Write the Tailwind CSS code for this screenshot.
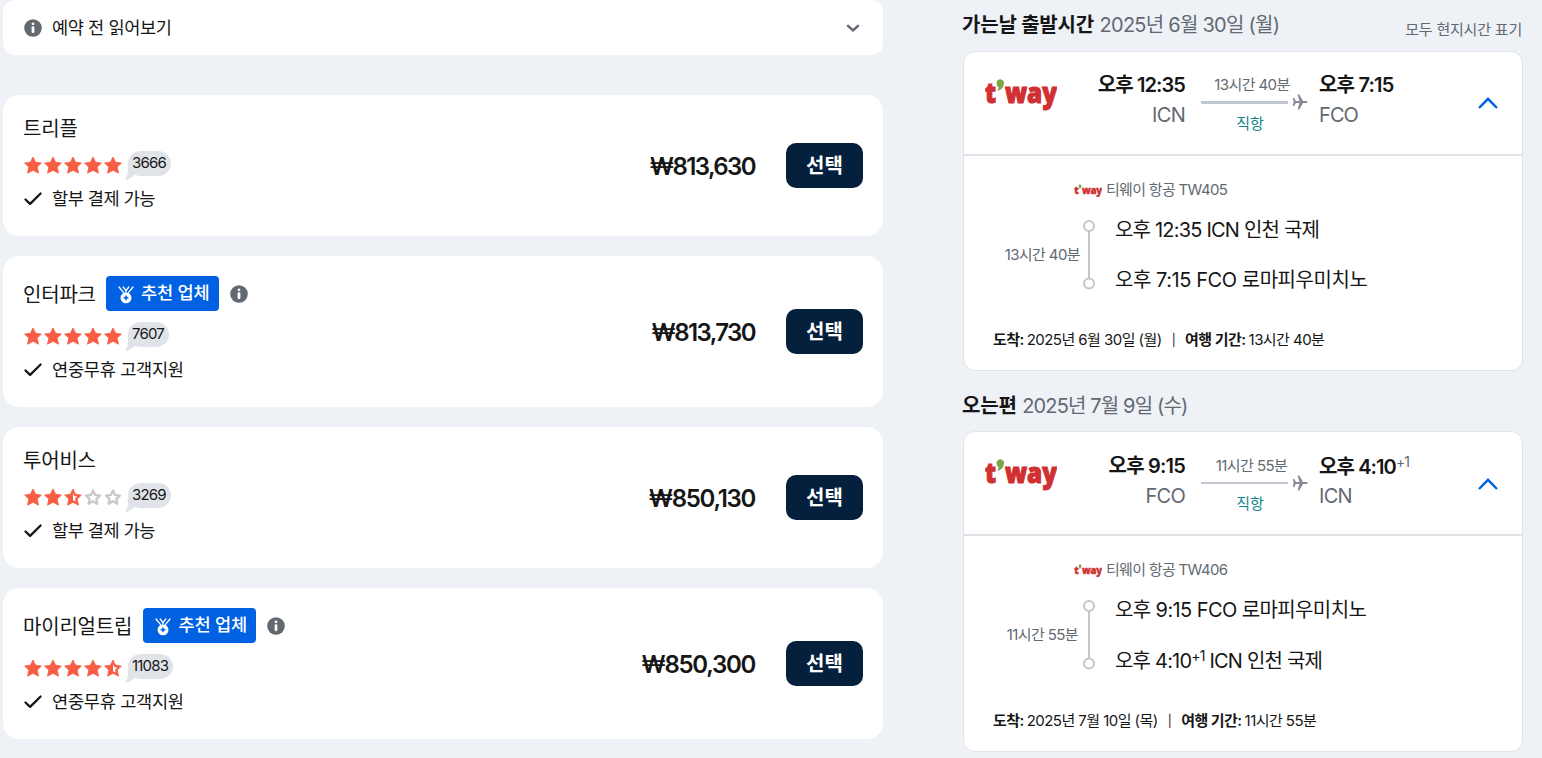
<!DOCTYPE html>
<html lang="ko">
<head>
    <meta charset="UTF-8">
    <meta name="viewport" content="width=device-width, initial-scale=1.0">
    <title>항공권 예약</title>
    <script src="https://cdn.jsdelivr.net/npm/@tailwindcss/browser@4"></script>
</head>
<body class="bg-[#eef1f6] text-[#161616] h-[758px] overflow-hidden font-['Inter','Noto_Sans_CJK_KR',sans-serif]">

    <!-- Shared icons -->
    <svg class="hidden">
        <symbol id="info" viewBox="0 0 18 18">
            <circle cx="9" cy="9" r="8.8" fill="#626971"/>
            <circle cx="9" cy="4.8" r="1.4" fill="#fff"/>
            <path d="M9 8.6v4.2" stroke="#fff" stroke-width="2.8" stroke-linecap="round"/>
        </symbol>
        <symbol id="star" viewBox="0 0 20 20">
            <path d="M10 2l2.6 5.2 5.8.9-4.2 4 1.3 6.1-5.5-2.9-5.5 2.9 1.3-6.1-4.2-4 5.8-.9z" fill="#f65d42" stroke="#f65d42" stroke-width=".8" stroke-linejoin="round"/>
        </symbol>
        <symbol id="star-half" viewBox="0 0 20 20">
            <path d="M10 2l2.6 5.2 5.8.9-4.2 4 1.3 6.1-5.5-2.9-5.5 2.9 1.3-6.1-4.2-4 5.8-.9z" fill="#f65d42" stroke="#f65d42" stroke-width=".8" stroke-linejoin="round"/>
            <path d="M10 6.200l1.400 2.900 2.700.5-2 2.200.5 2.800-2.600-1.300z" fill="#fff"/>
        </symbol>
        <symbol id="star-empty" viewBox="0 0 20 20">
            <path d="M10 3.400l2.100 4.500 4.800.7-3.500 3.200.9 4.900-4.300-2.400-4.300 2.400.9-4.900-3.500-3.200 4.800-.7z" fill="none" stroke="#c9c9c9" stroke-width="2.400" stroke-linejoin="round"/>
        </symbol>
        <symbol id="check" viewBox="0 0 20 20">
            <path d="M2.500 11.500l4.600 4.400L17.600 5.500" fill="none" stroke="#161616" stroke-width="2.300" stroke-linecap="round" stroke-linejoin="round"/>
        </symbol>
        <symbol id="medal" viewBox="0 0 18 20">
            <path d="M2 3l4.400 5.300M6.200 3l3.200 4.100M16 3l-4.400 5.300M11.800 3L8.600 7.100" stroke="#fff" stroke-width="1.300" stroke-linecap="round"/>
            <circle cx="9" cy="13.800" r="5.500" fill="#fff"/>
            <path d="M9 11.400l.8 1.600 1.700.8-1.700.8L9 16.200l-.8-1.600-1.700-.8 1.700-.8z" fill="#0062e3" stroke="#0062e3" stroke-width=".6"/>
        </symbol>
        <symbol id="tail" viewBox="0 0 14 14">
            <path d="M3 0v5Q3 9 .6 12.2Q0 13.8 1.6 13.8Q4 13.6 9 9.5L12 8z" fill="#e0e4e9"/>
        </symbol>
        <symbol id="plane" viewBox="0 0 16 16">
            <path d="M.8 4h1.400l1.700 2.900h3.500L5.600.5h1.600l3.900 6.400h3.100q1.500.2 1.500 1.100t-1.500 1.100h-3.100l-3.900 6.400H5.600l1.800-6.400H3.900L2.200 12H.8L1.700 8z" fill="#8b8798"/>
        </symbol>
        <symbol id="tway" viewBox="0 0 72 34">
            <g font-family="Open Sans, sans-serif" font-weight="800" font-size="29" fill="#d13032" stroke="#d13032" stroke-width="1.200">
                <text x="0" y="25" textLength="11" lengthAdjust="spacingAndGlyphs">t</text>
                <text x="20" y="25" textLength="52" lengthAdjust="spacingAndGlyphs">way</text>
            </g>
            <path d="M11.500 4.500a3.800 3.600 0 1 1 7.300 1.800q-.8 5.400-6.300 6.400 0-1.500 1.300-3.200Q11.300 8 11.500 4.500z" fill="#7aa648"/>
        </symbol>
    </svg>

    <div class="flex">
        <!-- Agents -->
        <main class="ml-[3px] w-[880px] flex flex-col gap-5">
            <div class="bg-white rounded-xl h-[55px] px-5 mb-5 flex items-center">
                <svg class="w-5 h-[18px]"><use href="#info"/></svg>
                <span class="ml-[9px] pt-0.5 text-[17.6px] tracking-[-0.4px]">예약 전 읽어보기</span>
                <svg class="w-5 h-5 ml-auto" viewBox="0 0 20 20"><path d="M5 7.800l5 4.600 5-4.600" fill="none" stroke="#626971" stroke-width="2.500" stroke-linecap="round"/></svg>
            </div>

            <div class="bg-white rounded-2xl p-5 h-[141px] flex items-center">
                <div class="h-full">
                    <div class="h-[25px] pt-[3px] flex items-center text-xl tracking-[-0.2px]">트리플</div>
                    <div class="h-[50px] flex items-center">
                        <svg class="w-5 h-5"><use href="#star"/></svg>
                        <svg class="w-5 h-5"><use href="#star"/></svg>
                        <svg class="w-5 h-5"><use href="#star"/></svg>
                        <svg class="w-5 h-5"><use href="#star"/></svg>
                        <svg class="w-5 h-5"><use href="#star"/></svg>
                        <div class="relative ml-[5px] mb-[3px] h-[25px] w-[43px] pl-1 rounded-full bg-[#e0e4e9] text-[15px] leading-6 tracking-[-0.8px]">3666<svg class="absolute -left-[3px] bottom-[-4px] w-3.5 h-3.5"><use href="#tail"/></svg></div>
                    </div>
                    <div class="h-4 flex items-center text-[17.6px] tracking-[-0.5px]"><svg class="w-5 h-5 mr-[9px]"><use href="#check"/></svg><span class="pt-0.5">할부 결제 가능</span></div>
                </div>
                <span class="ml-auto mr-[31px] pt-0.5 text-2xl font-semibold tracking-[-1.6px]">₩813,630</span>
                <button class="bg-[#05203c] text-white text-xl font-bold w-[77px] h-[45px] rounded-[10px]">선택</button>
            </div>

            <div class="bg-white rounded-2xl p-5 h-[151px] flex items-center">
                <div class="h-full">
                    <div class="h-[35px] flex items-center text-xl tracking-[-0.2px]"><span class="pt-[3px]">인터파크</span>
                        <span class="ml-2.5 w-[113px] h-[35px] rounded bg-[#0062e3] text-white text-[17.6px] font-medium flex items-center justify-center gap-[6px] pl-0.5"><svg class="w-[18px] h-5"><use href="#medal"/></svg>추천 업체</span>
                        <svg class="w-[18px] h-[18px] ml-[11px]"><use href="#info"/></svg>
                    </div>
                    <div class="h-[50px] flex items-center">
                        <svg class="w-5 h-5"><use href="#star"/></svg>
                        <svg class="w-5 h-5"><use href="#star"/></svg>
                        <svg class="w-5 h-5"><use href="#star"/></svg>
                        <svg class="w-5 h-5"><use href="#star"/></svg>
                        <svg class="w-5 h-5"><use href="#star"/></svg>
                        <div class="relative ml-[5px] mb-[3px] h-[25px] w-[41px] pl-1 rounded-full bg-[#e0e4e9] text-[15px] leading-6 tracking-[-0.8px]">7607<svg class="absolute -left-[3px] bottom-[-4px] w-3.5 h-3.5"><use href="#tail"/></svg></div>
                    </div>
                    <div class="h-4 flex items-center text-[17.6px] tracking-[-0.3px]"><svg class="w-5 h-5 mr-[9px]"><use href="#check"/></svg><span class="pt-0.5">연중무휴 고객지원</span></div>
                </div>
                <span class="ml-auto mr-[31px] pt-0.5 text-2xl font-semibold tracking-[-1.6px]">₩813,730</span>
                <button class="bg-[#05203c] text-white text-xl font-bold w-[77px] h-[45px] rounded-[10px]">선택</button>
            </div>

            <div class="bg-white rounded-2xl p-5 h-[141px] flex items-center">
                <div class="h-full">
                    <div class="h-[25px] pt-[3px] flex items-center text-xl tracking-[-0.2px]">투어비스</div>
                    <div class="h-[50px] flex items-center">
                        <svg class="w-5 h-5"><use href="#star"/></svg>
                        <svg class="w-5 h-5"><use href="#star"/></svg>
                        <svg class="w-5 h-5"><use href="#star-half"/></svg>
                        <svg class="w-5 h-5"><use href="#star-empty"/></svg>
                        <svg class="w-5 h-5"><use href="#star-empty"/></svg>
                        <div class="relative ml-[5px] mb-[3px] h-[25px] w-[43px] pl-1 rounded-full bg-[#e0e4e9] text-[15px] leading-6 tracking-[-0.8px]">3269<svg class="absolute -left-[3px] bottom-[-4px] w-3.5 h-3.5"><use href="#tail"/></svg></div>
                    </div>
                    <div class="h-4 flex items-center text-[17.6px] tracking-[-0.5px]"><svg class="w-5 h-5 mr-[9px]"><use href="#check"/></svg><span class="pt-0.5">할부 결제 가능</span></div>
                </div>
                <span class="ml-auto mr-[31px] pt-0.5 text-2xl font-semibold tracking-[-1.300px]">₩850,130</span>
                <button class="bg-[#05203c] text-white text-xl font-bold w-[77px] h-[45px] rounded-[10px]">선택</button>
            </div>

            <div class="bg-white rounded-2xl p-5 h-[151px] flex items-center">
                <div class="h-full">
                    <div class="h-[35px] flex items-center text-xl tracking-[-0.2px]"><span class="pt-[3px]">마이리얼트립</span>
                        <span class="ml-[11px] w-[113px] h-[35px] rounded bg-[#0062e3] text-white text-[17.6px] font-medium flex items-center justify-center gap-[6px] pl-0.5"><svg class="w-[18px] h-5"><use href="#medal"/></svg>추천 업체</span>
                        <svg class="w-[18px] h-[18px] ml-[11px]"><use href="#info"/></svg>
                    </div>
                    <div class="h-[50px] flex items-center">
                        <svg class="w-5 h-5"><use href="#star"/></svg>
                        <svg class="w-5 h-5"><use href="#star"/></svg>
                        <svg class="w-5 h-5"><use href="#star"/></svg>
                        <svg class="w-5 h-5"><use href="#star"/></svg>
                        <svg class="w-5 h-5"><use href="#star-half"/></svg>
                        <div class="relative ml-[5px] mb-[3px] h-[25px] w-[45px] pl-1 rounded-full bg-[#e0e4e9] text-[15px] leading-6 tracking-[-0.8px]">11083<svg class="absolute -left-[3px] bottom-[-4px] w-3.5 h-3.5"><use href="#tail"/></svg></div>
                    </div>
                    <div class="h-4 flex items-center text-[17.6px] tracking-[-0.3px]"><svg class="w-5 h-5 mr-[9px]"><use href="#check"/></svg><span class="pt-0.5">연중무휴 고객지원</span></div>
                </div>
                <span class="ml-auto mr-[31px] pt-0.5 text-2xl font-semibold tracking-[-1.300px]">₩850,300</span>
                <button class="bg-[#05203c] text-white text-xl font-bold w-[77px] h-[45px] rounded-[10px]">선택</button>
            </div>
        </main>

        <!-- Itinerary -->
        <aside class="ml-20 w-[560px]">
            <!-- Outbound -->
            <div class="h-[51px] flex items-center justify-between">
                <h2 class="text-xl text-[#626971] whitespace-nowrap mb-0.5 -ml-px"><b class="text-[#161616] tracking-[-0.2px]">가는날 출발시간</b> <span class="tracking-[-0.75px]">2025년 6월 30일 (월)</span></h2>
                <span class="text-[15px] text-[#626971] mt-2.5 mr-px tracking-[-0.2px]">모두 현지시간 표기</span>
            </div>
            <section class="bg-white border border-[#e0e4e9] rounded-xl h-[320px]">
                <div class="h-[104px] border-b-2 border-[#e0e4e9] pl-[21px] pr-6 flex items-center">
                    <svg class="w-[72px] h-[34px] mb-4"><use href="#tway"/></svg>
                    <div class="w-32 text-right text-xl leading-[30px] mb-1.5">
                        <div class="font-semibold tracking-[-0.9px]">오후 12:35</div>
                        <div class="text-[#626971] tracking-[-0.7px]">ICN</div>
                    </div>
                    <div class="ml-4 w-[108px] text-[15px]">
                        <div class="h-[22px] leading-[22px] text-[#626971] text-center pr-2.5 pl-1 tracking-[-0.6px] whitespace-nowrap mb-[-1px]">13시간 40분</div>
                        <div class="flex items-center h-4"><div class="w-[87px] h-[3px] bg-[#c1c7cf]"></div><svg class="w-4 h-4 ml-1 mb-0.5"><use href="#plane"/></svg></div>
                        <div class="h-[22px] leading-[26px] text-[#0c838a] text-center pr-2.5">직항</div>
                    </div>
                    <div class="ml-2.5 text-xl leading-[30px] mb-1.5">
                        <div class="font-semibold tracking-[-0.8px]">오후 7:15</div>
                        <div class="text-[#626971] tracking-[-0.9px]">FCO</div>
                    </div>
                    <svg class="w-5 h-5 ml-auto" viewBox="0 0 20 20"><path d="M1 15l9-9.200 9 9.200" fill="none" stroke="#0062e3" stroke-width="2.500"/></svg>
                </div>
                <div class="pt-[23px]">
                    <div class="ml-[110px] h-[22px] flex items-center text-[15px] text-[#626971] tracking-[-0.7px]"><svg class="w-7 h-[13px] mr-1"><use href="#tway"/></svg>티웨이 항공 TW405</div>
                    <div class="mt-[14px] flex">
                        <div class="w-[116px] pt-[29px] text-right text-[15px] leading-[22px] text-[#626971] tracking-[-0.6px]">13시간 40분</div>
                        <svg class="w-[14px] h-[74px] ml-[2px] mt-[3px]" viewBox="0 0 14 74" fill="none" stroke="#c1c7cf" stroke-width="2"><circle cx="7" cy="8" r="5"/><path d="M7 13v47"/><circle cx="7" cy="65.500" r="5"/></svg>
                        <div class="ml-[19px] text-xl leading-[30px] whitespace-nowrap">
                            <div class="tracking-[-0.8px]">오후 12:35 ICN 인천 국제</div>
                            <div class="mt-5 tracking-[-0.45px]">오후 7:15 FCO 로마피우미치노</div>
                        </div>
                    </div>
                    <div class="ml-[29px] mt-[34px] h-[22px] text-[15px] leading-[22px] tracking-[-0.55px] whitespace-nowrap flex"><b class="font-semibold mr-[3px]">도착:</b>2025년 6월 30일 (월)<span class="mx-2.5 text-xs leading-[22px]">|</span><b class="font-semibold mr-[3px]">여행 기간:</b>13시간 40분</div>
                </div>
            </section>

            <!-- Return -->
            <div class="h-[60px] pt-2.5 flex items-center">
                <h2 class="text-xl text-[#626971] whitespace-nowrap -ml-px"><b class="text-[#161616] tracking-[-0.2px]">오는편</b> <span class="tracking-[-0.85px]">2025년 7월 9일 (수)</span></h2>
            </div>
            <section class="bg-white border border-[#e0e4e9] rounded-xl h-[321px]">
                <div class="h-[104px] border-b-2 border-[#e0e4e9] pl-[21px] pr-6 flex items-center">
                    <svg class="w-[72px] h-[34px] mb-4"><use href="#tway"/></svg>
                    <div class="w-32 text-right text-xl leading-[30px] mb-1">
                        <div class="font-semibold tracking-[-0.8px]">오후 9:15</div>
                        <div class="text-[#626971] tracking-[-0.7px]">FCO</div>
                    </div>
                    <div class="ml-4 w-[108px] text-[15px]">
                        <div class="h-[22px] leading-[24px] text-[#626971] text-center pr-2.5 pl-[3px] tracking-[-0.6px] whitespace-nowrap mb-[-1px]">11시간 55분</div>
                        <div class="flex items-center h-4"><div class="w-[87px] h-[2px] bg-[#c1c7cf]"></div><svg class="w-4 h-4 ml-1"><use href="#plane"/></svg></div>
                        <div class="h-[22px] leading-[26px] text-[#0c838a] text-center pr-2.5">직항</div>
                    </div>
                    <div class="ml-2.5 text-xl leading-[30px] mb-1">
                        <div class="font-semibold tracking-[-0.9px] h-[30px] pt-px">오후 4:10<sup class="text-[14px] font-normal text-[#626971]">+1</sup></div>
                        <div class="text-[#626971] tracking-[-0.7px]">ICN</div>
                    </div>
                    <svg class="w-5 h-5 ml-auto mt-0.5" viewBox="0 0 20 20"><path d="M1 15l9-9.200 9 9.200" fill="none" stroke="#0062e3" stroke-width="2.500"/></svg>
                </div>
                <div class="pt-[23px]">
                    <div class="ml-[110px] h-[22px] flex items-center text-[15px] text-[#626971] tracking-[-0.7px]"><svg class="w-7 h-[13px] mr-1"><use href="#tway"/></svg>티웨이 항공 TW406</div>
                    <div class="mt-[14px] flex">
                        <div class="w-[114px] pt-[29px] text-right text-[15px] leading-[22px] text-[#626971] tracking-[-0.6px]">11시간 55분</div>
                        <svg class="w-[14px] h-[74px] ml-1 mt-[3px]" viewBox="0 0 14 74" fill="none" stroke="#c1c7cf" stroke-width="2"><circle cx="7" cy="8" r="5"/><path d="M7 13v47"/><circle cx="7" cy="65.500" r="5"/></svg>
                        <div class="ml-[19px] text-xl leading-[30px] whitespace-nowrap tracking-[-0.6px]">
                            <div>오후 9:15 FCO 로마피우미치노</div>
                            <div class="mt-[21px] h-[29px] tracking-[-0.8px]">오후 4:10<sup class="text-[14px]">+1</sup> ICN 인천 국제</div>
                        </div>
                    </div>
                    <div class="ml-[29px] mt-[35px] h-[22px] text-[15px] leading-[22px] tracking-[-0.55px] whitespace-nowrap flex"><b class="font-semibold mr-[3px]">도착:</b>2025년 7월 10일 (목)<span class="mx-2.5 text-xs leading-[22px]">|</span><b class="font-semibold mr-[3px]">여행 기간:</b>11시간 55분</div>
                </div>
            </section>
        </aside>
    </div>
</body>
</html>
